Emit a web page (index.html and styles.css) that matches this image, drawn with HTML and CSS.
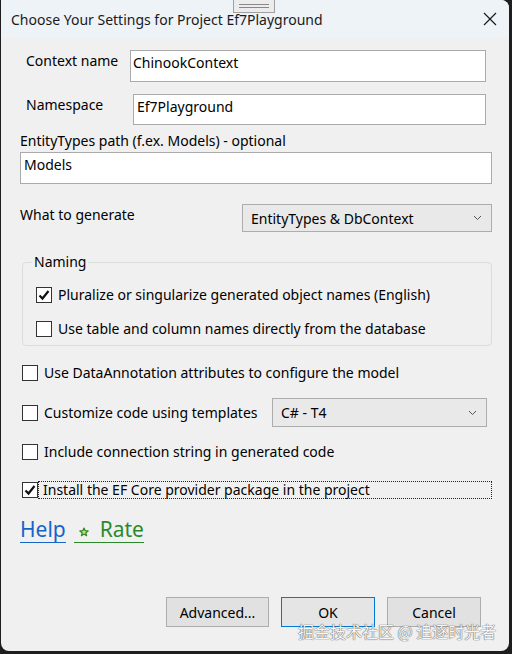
FILE: index.html
```html
<!DOCTYPE html>
<html lang="en">
<head>
  <meta charset="UTF-8">
  <title>Choose Your Settings</title>
  <link rel="stylesheet" href="styles.css">
</head>
<body>
<div class="window">
  <div class="grip"><span></span><span></span></div>

  <div class="titlebar">
    <span class="title">Choose Your Settings for Project Ef7Playground</span>
    <svg class="close" width="14" height="14" viewBox="0 0 14 14">
      <path d="M1 1 L13 13 M13 1 L1 13" stroke="#1a1a1a" stroke-width="1.2" fill="none"/>
    </svg>
  </div>

  <div class="content">
    <div class="row row-context">
      <label class="lbl">Context name</label>
      <div class="textbox tb-context">ChinookContext</div>
    </div>

    <div class="row row-namespace">
      <label class="lbl">Namespace</label>
      <div class="textbox tb-namespace">Ef7Playground</div>
    </div>

    <div class="path-label">EntityTypes path (f.ex. Models) - optional</div>
    <div class="textbox tb-path">Models</div>

    <div class="row row-generate">
      <span class="gen-label">What to generate</span>
      <div class="combo combo-generate">
        <span>EntityTypes &amp; DbContext</span>
        <svg width="9" height="6" viewBox="0 0 9 6"><path d="M1 1 L4.5 4.5 L8 1" stroke="#555" stroke-width="1" fill="none"/></svg>
      </div>
    </div>

    <fieldset class="naming">
      <legend>Naming</legend>
      <div class="check check-plural">
        <span class="box"><svg width="14" height="14" viewBox="0 0 14 14"><path d="M2.5 7.5 L5.5 10.5 L11.5 3" stroke="#111" stroke-width="2.2" fill="none"/></svg></span>
        <span>Pluralize or singularize generated object names (English)</span>
      </div>
      <div class="check check-table">
        <span class="box"></span>
        <span>Use table and column names directly from the database</span>
      </div>
    </fieldset>

    <div class="check check-annot">
      <span class="box"></span>
      <span>Use DataAnnotation attributes to configure the model</span>
    </div>

    <div class="check check-templ">
      <span class="box"></span>
      <span class="templ-text">Customize code using templates</span>
      <div class="combo combo-templ">
        <span>C# - T4</span>
        <svg width="9" height="6" viewBox="0 0 9 6"><path d="M1 1 L4.5 4.5 L8 1" stroke="#555" stroke-width="1" fill="none"/></svg>
      </div>
    </div>

    <div class="check check-conn">
      <span class="box"></span>
      <span>Include connection string in generated code</span>
    </div>

    <div class="check check-install">
      <span class="box"><svg width="14" height="14" viewBox="0 0 14 14"><path d="M2.5 7.5 L5.5 10.5 L11.5 3" stroke="#111" stroke-width="2.2" fill="none"/></svg></span>
      <span class="focus">Install the EF Core provider package in the project</span>
    </div>

    <div class="links">
      <a class="help">Help</a>
      <a class="rate"><svg width="10" height="10" viewBox="0 0 24 24"><path d="M12 2.5 L14.8 9 L21.8 9.4 L16.4 13.9 L18.2 20.8 L12 17 L5.8 20.8 L7.6 13.9 L2.2 9.4 L9.2 9 Z" fill="#e3d86a" stroke="#2a8a2a" stroke-width="3" stroke-linejoin="round"/></svg>&nbsp; Rate</a>
    </div>

    <div class="buttons">
      <button class="btn btn-adv">Advanced...</button>
      <button class="btn btn-ok">OK</button>
      <button class="btn btn-cancel">Cancel</button>
    </div>
  </div>

  <div class="watermark">掘金技术社区 @ 追逐时光者</div>
</div>
</body>
</html>
```

FILE: styles.css
```css
body {
  margin: 0;
  background-color: #1e1e1e;
  font-family: "Noto Sans", "Open Sans", sans-serif;
  font-size: 14px;
  color: #000;
}
.window {
  position: relative;
  margin-left: 1px;
  width: 508px;
  height: 651px;
  background-color: #f0f0f0;
  border-radius: 0 8px 8px 8px;
  overflow: hidden;
}
.grip {
  position: absolute;
  left: 232px;
  top: 0;
  width: 42px;
  height: 13px;
  background-color: #ececec;
  border: 1px solid #a0a0a0;
  border-top: none;
  display: flex;
  flex-direction: column;
  align-items: center;
  justify-content: center;
  gap: 2px;
  box-sizing: border-box;
}
.grip span {
  display: block;
  width: 30px;
  height: 1px;
  background-color: #888;
}
.titlebar {
  height: 38px;
  background-color: #eef3f8;
  display: flex;
  align-items: center;
  justify-content: space-between;
  padding: 0 12px 0 10px;
}
.title {
  font-size: 14px;
  color: #1a1a1a;
}
.content {
  padding: 12px 17px 0 19px;
}
.row {
  display: flex;
  align-items: flex-start;
}
.lbl {
  padding-left: 6px;
  line-height: 22px;
}
.textbox {
  background-color: #fff;
  border: 1px solid #aaa;
  box-sizing: border-box;
  padding: 1px 2px;
  line-height: 22px;
}
.tb-context {
  margin-left: auto;
  margin-right: 6px;
  width: 356px;
  height: 32px;
}
.row-namespace {
  margin-top: 12px;
}
.tb-namespace {
  margin-left: auto;
  margin-right: 6px;
  width: 353px;
  height: 31px;
  padding-left: 3px;
}
.path-label {
  margin-top: 5px;
  line-height: 22px;
}
.tb-path {
  height: 32px;
  padding-left: 3px;
}
.row-generate {
  margin-top: 20px;
  justify-content: space-between;
}
.gen-label {
  line-height: 22px;
}
.combo {
  background-color: #e9e9e9;
  border: 1px solid #adadad;
  box-sizing: border-box;
  display: flex;
  align-items: center;
  justify-content: space-between;
  padding: 0 9px 0 8px;
}
.combo-generate {
  width: 250px;
  height: 28px;
}
.naming {
  margin: 21px 0 0 2px;
  padding: 0 0 6px 13px;
  border: 1px solid #dcdcdc;
  border-radius: 4px;
  height: 93px;
  box-sizing: border-box;
}
.naming legend {
  padding: 0 2px;
  margin-left: -4px;
  line-height: 18px;
}
.check {
  display: flex;
  align-items: center;
  gap: 6px;
  line-height: 22px;
}
.box {
  width: 16px;
  height: 16px;
  box-sizing: border-box;
  border: 1px solid #333;
  background-color: #fff;
  display: flex;
  align-items: center;
  justify-content: center;
  flex-shrink: 0;
}
.check-plural {
  margin-top: 13px;
}
.check-table {
  margin-top: 12px;
}
.check-annot {
  margin-top: 16px;
  margin-left: 2px;
}
.check-templ {
  margin-top: 14px;
  margin-left: 2px;
}
.templ-text {
  margin-right: auto;
}
.combo-templ {
  width: 215px;
  height: 29px;
  margin-right: 5px;
}
.check-conn {
  margin-top: 14px;
  margin-left: 2px;
}
.check-install {
  margin-top: 18px;
  margin-left: 2px;
  gap: 0;
}
.focus {
  flex: 1;
  border: 1px dotted #222;
  padding-left: 4px;
  line-height: 16px;
}
.links {
  margin-top: 17px;
  display: flex;
  gap: 8px;
  font-size: 21px;
  line-height: 26px;
}
.links a {
  border-bottom: 1px solid currentColor;
}
.help {
  color: #1565c8;
}
.rate {
  color: #2a8a2a;
  padding-left: 5px;
}
.buttons {
  margin-top: 54px;
  display: flex;
  padding-left: 146px;
  gap: 12px;
}
.btn {
  font-family: inherit;
  font-size: 14px;
  height: 30px;
  background-color: #e1e1e1;
  border: 1px solid #adadad;
  color: #000;
  padding: 0;
}
.btn-adv {
  width: 103px;
}
.btn-ok {
  width: 94px;
  border-color: #0078d7;
  background-color: #e5e5e5;
}
.btn-cancel {
  width: 94px;
}
.watermark {
  position: absolute;
  left: 297px;
  top: 619px;
  font-family: "Noto Sans CJK SC", sans-serif;
  font-size: 16px;
  color: #f6f6f6;
  text-shadow: 0 0 1px #555, 0 0 1px #555;
  white-space: nowrap;
}
```
